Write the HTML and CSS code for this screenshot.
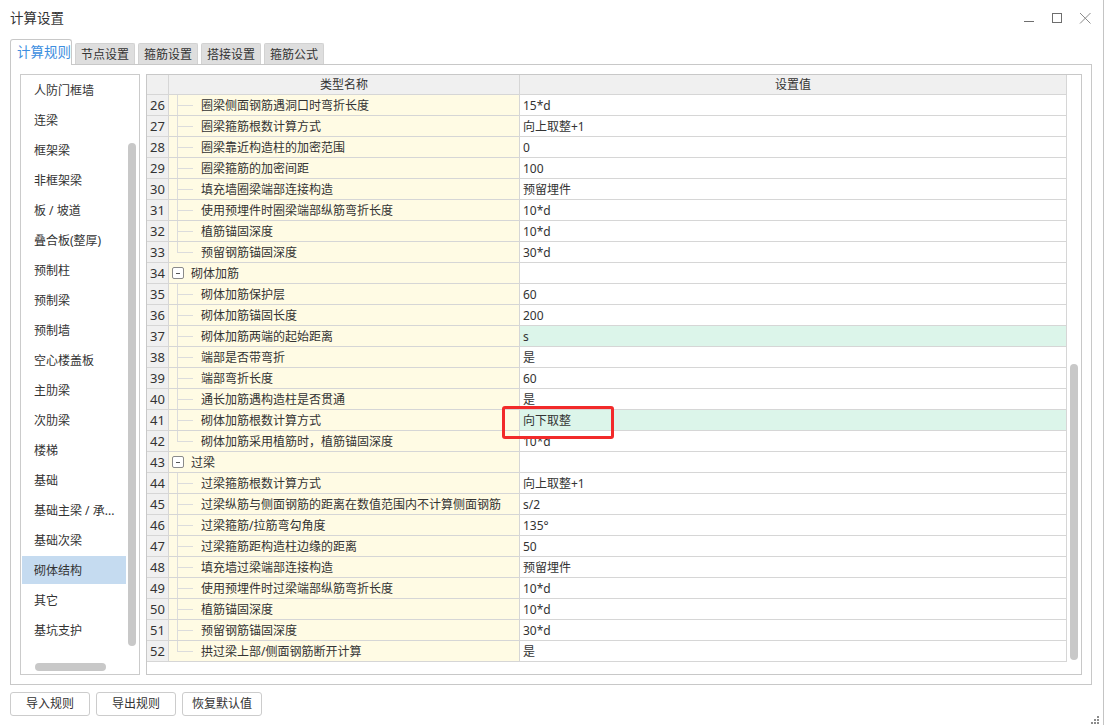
FILE: index.html
```html
<!DOCTYPE html>
<html lang="zh-CN">
<head>
<meta charset="utf-8">
<title>计算设置</title>
<link rel="stylesheet" href="styles.css">
</head>
<body>
<div class="window">
  <div class="titlebar">
    <span class="title">计算设置</span>
    <div class="controls">
      <svg width="12" height="12" viewBox="0 0 12 12"><path d="M1 9.5H11" stroke="#6e6e6e" stroke-width="1" fill="none"/></svg>
      <svg width="12" height="12" viewBox="0 0 12 12"><rect x="1.5" y="1.5" width="9" height="9" stroke="#6e6e6e" stroke-width="1" fill="none"/></svg>
      <svg width="12" height="12" viewBox="0 0 12 12"><path d="M1 1L11.5 11.5M11.5 1L1 11.5" stroke="#8a8a8a" stroke-width="1" fill="none"/></svg>
    </div>
  </div>

  <div class="tabs">
    <div class="tab active">计算规则</div>
    <div class="tab">节点设置</div>
    <div class="tab">箍筋设置</div>
    <div class="tab">搭接设置</div>
    <div class="tab">箍筋公式</div>
  </div>

  <div class="panel">
    <div class="list">
      <div class="list-body">
        <ul class="items">
          <li>人防门框墙</li>
          <li>连梁</li>
          <li>框架梁</li>
          <li>非框架梁</li>
          <li>板 / 坡道</li>
          <li>叠合板(整厚)</li>
          <li>预制柱</li>
          <li>预制梁</li>
          <li>预制墙</li>
          <li>空心楼盖板</li>
          <li>主肋梁</li>
          <li>次肋梁</li>
          <li>楼梯</li>
          <li>基础</li>
          <li>基础主梁 / 承...</li>
          <li>基础次梁</li>
          <li class="selected">砌体结构</li>
          <li>其它</li>
          <li>基坑支护</li>
        </ul>
        <div class="list-vscroll"><div class="list-vthumb"></div></div>
      </div>
      <div class="list-hscroll"><div class="list-hthumb"></div></div>
    </div>

    <div class="grid-box">
      <div class="grid">
        <div class="row head">
          <div class="c num"></div>
          <div class="c name">类型名称</div>
          <div class="c val">设置值</div>
        </div>
        <div class="row"><div class="c num">26</div><div class="c name"><span class="tree"></span><span class="txt">圈梁侧面钢筋遇洞口时弯折长度</span></div><div class="c val">15*d</div></div>
        <div class="row"><div class="c num">27</div><div class="c name"><span class="tree"></span><span class="txt">圈梁箍筋根数计算方式</span></div><div class="c val">向上取整+1</div></div>
        <div class="row"><div class="c num">28</div><div class="c name"><span class="tree"></span><span class="txt">圈梁靠近构造柱的加密范围</span></div><div class="c val">0</div></div>
        <div class="row"><div class="c num">29</div><div class="c name"><span class="tree"></span><span class="txt">圈梁箍筋的加密间距</span></div><div class="c val">100</div></div>
        <div class="row"><div class="c num">30</div><div class="c name"><span class="tree"></span><span class="txt">填充墙圈梁端部连接构造</span></div><div class="c val">预留埋件</div></div>
        <div class="row"><div class="c num">31</div><div class="c name"><span class="tree"></span><span class="txt">使用预埋件时圈梁端部纵筋弯折长度</span></div><div class="c val">10*d</div></div>
        <div class="row"><div class="c num">32</div><div class="c name"><span class="tree"></span><span class="txt">植筋锚固深度</span></div><div class="c val">10*d</div></div>
        <div class="row"><div class="c num">33</div><div class="c name"><span class="tree last"></span><span class="txt">预留钢筋锚固深度</span></div><div class="c val">30*d</div></div>
        <div class="row"><div class="c num">34</div><div class="c name group"><span class="toggle"><i></i></span><span class="gtxt">砌体加筋</span></div><div class="c val"></div></div>
        <div class="row"><div class="c num">35</div><div class="c name"><span class="tree"></span><span class="txt">砌体加筋保护层</span></div><div class="c val">60</div></div>
        <div class="row"><div class="c num">36</div><div class="c name"><span class="tree"></span><span class="txt">砌体加筋锚固长度</span></div><div class="c val">200</div></div>
        <div class="row"><div class="c num">37</div><div class="c name"><span class="tree"></span><span class="txt">砌体加筋两端的起始距离</span></div><div class="c val green">s</div></div>
        <div class="row"><div class="c num">38</div><div class="c name"><span class="tree"></span><span class="txt">端部是否带弯折</span></div><div class="c val">是</div></div>
        <div class="row"><div class="c num">39</div><div class="c name"><span class="tree"></span><span class="txt">端部弯折长度</span></div><div class="c val">60</div></div>
        <div class="row"><div class="c num">40</div><div class="c name"><span class="tree"></span><span class="txt">通长加筋遇构造柱是否贯通</span></div><div class="c val">是</div></div>
        <div class="row"><div class="c num">41</div><div class="c name"><span class="tree"></span><span class="txt">砌体加筋根数计算方式</span></div><div class="c val green">向下取整</div></div>
        <div class="row"><div class="c num">42</div><div class="c name"><span class="tree last"></span><span class="txt">砌体加筋采用植筋时，植筋锚固深度</span></div><div class="c val">10*d</div></div>
        <div class="row"><div class="c num">43</div><div class="c name group"><span class="toggle"><i></i></span><span class="gtxt">过梁</span></div><div class="c val"></div></div>
        <div class="row"><div class="c num">44</div><div class="c name"><span class="tree"></span><span class="txt">过梁箍筋根数计算方式</span></div><div class="c val">向上取整+1</div></div>
        <div class="row"><div class="c num">45</div><div class="c name"><span class="tree"></span><span class="txt">过梁纵筋与侧面钢筋的距离在数值范围内不计算侧面钢筋</span></div><div class="c val">s/2</div></div>
        <div class="row"><div class="c num">46</div><div class="c name"><span class="tree"></span><span class="txt">过梁箍筋/拉筋弯勾角度</span></div><div class="c val">135°</div></div>
        <div class="row"><div class="c num">47</div><div class="c name"><span class="tree"></span><span class="txt">过梁箍筋距构造柱边缘的距离</span></div><div class="c val">50</div></div>
        <div class="row"><div class="c num">48</div><div class="c name"><span class="tree"></span><span class="txt">填充墙过梁端部连接构造</span></div><div class="c val">预留埋件</div></div>
        <div class="row"><div class="c num">49</div><div class="c name"><span class="tree"></span><span class="txt">使用预埋件时过梁端部纵筋弯折长度</span></div><div class="c val">10*d</div></div>
        <div class="row"><div class="c num">50</div><div class="c name"><span class="tree"></span><span class="txt">植筋锚固深度</span></div><div class="c val">10*d</div></div>
        <div class="row"><div class="c num">51</div><div class="c name"><span class="tree"></span><span class="txt">预留钢筋锚固深度</span></div><div class="c val">30*d</div></div>
        <div class="row"><div class="c num">52</div><div class="c name"><span class="tree last"></span><span class="txt">拱过梁上部/侧面钢筋断开计算</span></div><div class="c val">是</div></div>
      </div>
      <div class="grid-vscroll"><div class="grid-vthumb"></div></div>
    </div>
  </div>

  <div class="buttons">
    <button class="btn">导入规则</button>
    <button class="btn">导出规则</button>
    <button class="btn">恢复默认值</button>
  </div>

  <div class="annot"></div>
  <svg class="grip" width="9" height="9" viewBox="0 0 9 9">
    <rect x="6" y="0" width="2" height="2" fill="#8c8c8c"/>
    <rect x="3" y="3" width="2" height="2" fill="#8c8c8c"/>
    <rect x="6" y="3" width="2" height="2" fill="#8c8c8c"/>
    <rect x="0" y="6" width="2" height="2" fill="#8c8c8c"/>
    <rect x="3" y="6" width="2" height="2" fill="#8c8c8c"/>
    <rect x="6" y="6" width="2" height="2" fill="#8c8c8c"/>
  </svg>
</div>
</body>
</html>
```

FILE: styles.css
```css
* { box-sizing: border-box; }

html, body {
  margin: 0;
  padding: 0;
  background: #ffffff;
}

body {
  font-family: "Noto Sans", "Noto Sans CJK SC", sans-serif;
  font-size: 12px;
  color: #333333;
}

.window {
  position: relative;
  width: 1104px;
  height: 725px;
  border-right: 1px solid #c4c4c4;
  background: #ffffff;
}

/* title bar */
.titlebar {
  height: 39px;
  display: flex;
  align-items: flex-start;
  justify-content: space-between;
  padding: 0 12px 0 10px;
}

.title {
  font-size: 13.5px;
  line-height: 20px;
  margin-top: 8px;
  color: #333333;
}

.controls {
  display: flex;
  gap: 16px;
  padding-top: 12px;
}

.controls svg { display: block; }

/* tabs */
.tabs {
  position: relative;
  z-index: 1;
  display: flex;
  align-items: flex-end;
  gap: 3px;
  height: 26px;
  margin-left: 10px;
}

.tab {
  height: 21px;
  width: 60px;
  margin-bottom: 1px;
  background: #dedede;
  border: 1px solid #d2d2d2;
  border-bottom: none;
  border-radius: 2px 2px 0 0;
  text-align: center;
  font-size: 12px;
  line-height: 21px;
  color: #333333;
}

.tab.active {
  height: 26px;
  width: 62px;
  margin-bottom: 0;
  background: #ffffff;
  border-color: #c8c8c8;
  border-radius: 3px 3px 0 0;
  color: #3d8ee0;
  font-size: 13.5px;
  line-height: 25px;
  text-align: left;
  padding-left: 6px;
}

/* panel */
.panel {
  margin: -1px 0 0 10px;
  width: 1082px;
  height: 621px;
  border: 1px solid #c8c8c8;
  padding: 9px;
  display: flex;
  gap: 6px;
}

/* left list */
.list {
  width: 120px;
  height: 601px;
  border: 1px solid #cbcbcb;
  display: flex;
  flex-direction: column;
}

.list-body {
  display: flex;
  height: 586px;
}

.items {
  list-style: none;
  margin: 1px 0 0 1px;
  padding: 0;
  width: 104px;
  display: flex;
  flex-direction: column;
  gap: 2px;
}

.items li {
  height: 28px;
  line-height: 30px;
  padding: 0 2px 0 12px;
  font-size: 12px;
  color: #333333;
  white-space: nowrap;
  overflow: hidden;
}

.items li.selected {
  background: #c5dbf0;
}

.list-vscroll {
  margin-left: 2px;
  width: 8px;
}

.list-vthumb {
  margin-top: 68px;
  width: 8px;
  height: 503px;
  border-radius: 4px;
  background: #c8c8c8;
}

.list-hscroll {
  padding: 2px 0 0 14px;
}

.list-hthumb {
  width: 71px;
  height: 8px;
  border-radius: 4px;
  background: #c8c8c8;
}

/* grid */
.grid-box {
  width: 936px;
  height: 601px;
  border: 1px solid #c8c8c8;
  display: flex;
}

.grid {
  width: 920px;
}

.row {
  display: grid;
  grid-template-columns: 22px 351px 547px;
  height: 21px;
}

.c {
  border-right: 1px solid #d6d6d6;
  border-bottom: 1px solid #d6d6d6;
  line-height: 21px;
  font-size: 12px;
  white-space: nowrap;
  overflow: hidden;
  color: #333333;
}

.row.head { height: 20px; }

.row.head .c {
  background: #f0f0f0;
  text-align: center;
  line-height: 20px;
}

.c.num {
  background: #f0f0f0;
  padding-left: 3px;
  font-size: 13px;
}

.row.head .c.num { padding-left: 0; }

.c.name {
  background: #fffbe4;
  display: flex;
  align-items: stretch;
  padding-left: 8px;
}

.row.head .c.name {
  display: block;
  padding-left: 0;
}

.c.val {
  background: #ffffff;
  padding-left: 3px;
}

.row.head .c.val { padding-left: 0; }

.c.val.green { background: #dcf5ea; }

.tree {
  width: 16px;
  border-left: 1px solid #dcdcdc;
  background: linear-gradient(#dcdcdc, #dcdcdc) no-repeat left center / 100% 1px;
}

.tree.last {
  border-left: none;
  background:
    linear-gradient(#dcdcdc, #dcdcdc) no-repeat left center / 100% 1px,
    linear-gradient(#dcdcdc, #dcdcdc) no-repeat left top / 1px 50%;
}

.txt { margin-left: 8px; }

.c.name.group { padding-left: 3px; align-items: center; }

.toggle {
  width: 12px;
  height: 12px;
  border: 1px solid #8a8a8a;
  border-radius: 2px;
  display: flex;
  align-items: center;
  justify-content: center;
  background: #ffffff;
}

.toggle i {
  display: block;
  width: 4px;
  height: 1px;
  background: #555555;
}

.gtxt { margin-left: 7px; }

.grid-vscroll {
  width: 14px;
  padding-left: 3px;
}

.grid-vthumb {
  margin-top: 289px;
  width: 8px;
  height: 296px;
  border-radius: 4px;
  background: #c8c8c8;
}

/* buttons */
.buttons {
  display: flex;
  gap: 6px;
  margin: 7px 0 0 10px;
}

.btn {
  width: 80px;
  height: 24px;
  border: 1px solid #cccccc;
  border-radius: 3px;
  background: #ffffff;
  font-family: "Noto Sans", "Noto Sans CJK SC", sans-serif;
  font-size: 12px;
  line-height: 22px;
  color: #333333;
  padding: 0;
}

/* overlays */
.annot {
  position: absolute;
  left: 502px;
  top: 406px;
  width: 112px;
  height: 33px;
  border: 3px solid #f22a2a;
  border-radius: 3px;
}

.grip {
  position: absolute;
  right: 3px;
  bottom: 0;
}
```
